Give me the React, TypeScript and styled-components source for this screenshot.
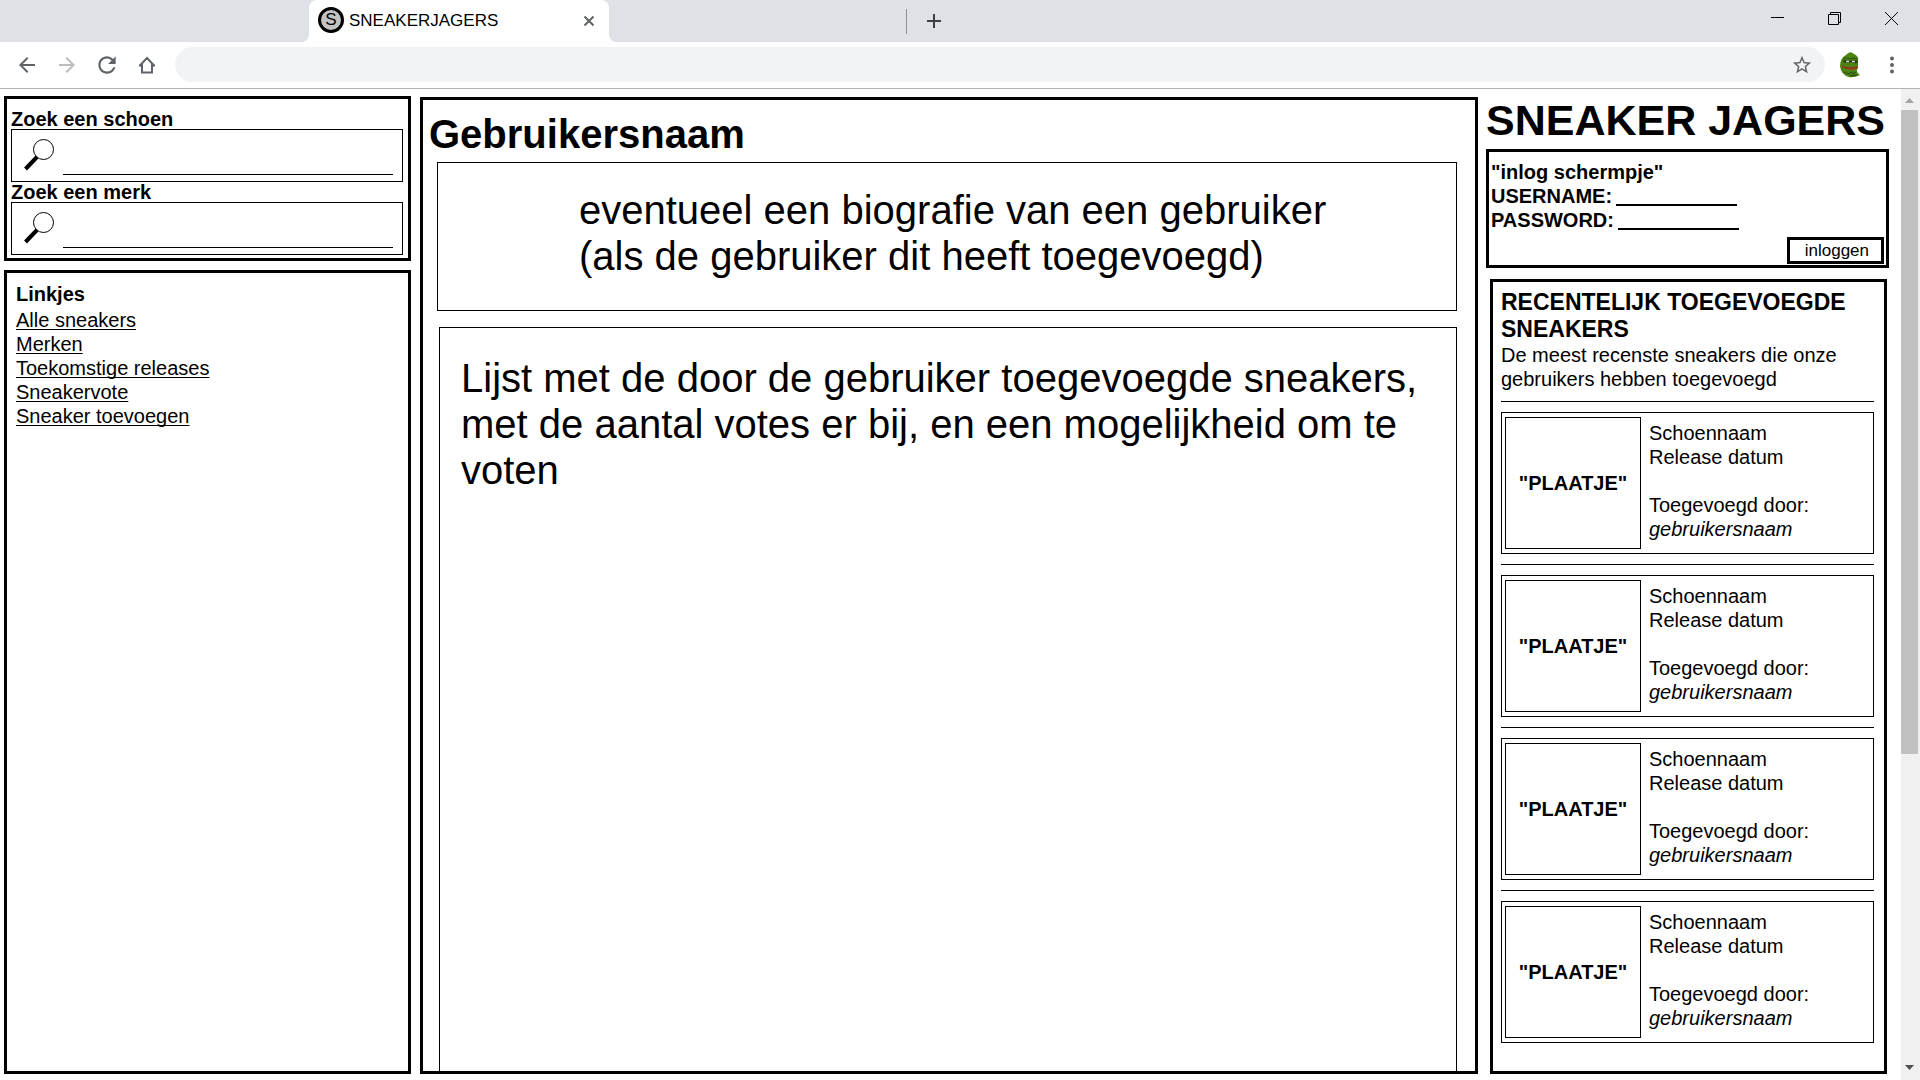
import React from 'react';
import styled, { createGlobalStyle } from 'styled-components';
import { MdArrowBack, MdArrowForward, MdRefresh, MdStarBorder } from 'react-icons/md';

const GlobalStyle = createGlobalStyle`
  * { box-sizing: border-box; }
  body {
    margin: 0;
    background: #fff;
    color: #000;
    font-family: 'Liberation Sans', Arial, sans-serif;
    font-size: 20px;
    line-height: 24px;
  }
  h1, h2, p, ul { margin: 0; padding: 0; }
  button, input { font-family: inherit; color: inherit; border: 0; background: none; padding: 0; margin: 0; }
  svg { display: block; }
`;

const Browser = styled.div`
  display: flex;
  flex-direction: column;
  min-height: 100vh;
`;

const TabStrip = styled.div`
  display: flex;
  align-items: center;
  height: 42px;
  padding-left: 309px;
  background: #dee1e6;
`;

const Tab = styled.div`
  position: relative;
  display: flex;
  align-items: center;
  width: 300px;
  height: 42px;
  padding: 0 8px 0 9px;
  background: #fff;
  border-radius: 8px 8px 0 0;
  &::before, &::after {
    content: '';
    position: absolute;
    bottom: 0;
    width: 8px;
    height: 8px;
  }
  &::before {
    left: -8px;
    background: radial-gradient(circle at 0 0, transparent 8px, #fff 8px);
  }
  &::after {
    right: -8px;
    background: radial-gradient(circle at 100% 0, transparent 8px, #fff 8px);
  }
`;

const Favicon = styled.span`
  display: flex;
  align-items: center;
  justify-content: center;
  width: 26px;
  height: 26px;
  margin: 0 5px 2px 0;
  border: 3px solid #000;
  border-radius: 50%;
  background: #c3c3c3;
  font-size: 17px;
`;

const TabTitle = styled.span`
  flex: 1;
  font-size: 17px;
  line-height: 20px;
`;

const IconButton = styled.button<{ $width?: number; $color?: string }>`
  display: flex;
  align-items: center;
  justify-content: center;
  flex: none;
  width: ${p => p.$width ?? 40}px;
  height: 32px;
  color: ${p => p.$color ?? '#5f6368'};
`;

const TabDivider = styled.span`
  width: 1px;
  height: 25px;
  margin: 0 7px 0 297px;
  background: #8e9195;
`;

const WindowButtons = styled.div`
  display: flex;
  margin-left: auto;
  padding-bottom: 5px;
`;

const Toolbar = styled.div`
  display: flex;
  align-items: center;
  height: 47px;
  padding: 0 6px 1px 7px;
  border-bottom: 1px solid #b4b5b7;
`;

const AddressBar = styled.div`
  display: flex;
  align-items: center;
  flex: 1;
  height: 35px;
  margin: 0 5px 0 8px;
  padding: 0 3px 0 18px;
  border-radius: 18px;
  background: #f1f3f4;
`;

const AddressInput = styled.input`
  flex: 1;
  height: 100%;
  font-size: 17px;
`;

const Viewport = styled.div`
  display: flex;
  flex: 1;
`;

const Page = styled.div`
  display: grid;
  grid-template-columns: 408px minmax(0, 1fr) 403px;
  gap: 8px;
  flex: 1;
  padding: 8px 12px 6px 4px;
`;

const Panel = styled.section`
  border: 3px solid #000;
`;

const LeftColumn = styled.aside`
  display: flex;
  flex-direction: column;
  gap: 9px;
  margin: -1px 1px 0 0;
`;

const SearchPanel = styled(Panel)`
  padding: 10px 5px 3px 4px;
`;

const Label = styled.label`
  display: block;
  font-weight: bold;
`;

const SearchLabel = styled(Label)`
  line-height: 20px;
`;

const SearchBox = styled.div`
  display: flex;
  align-items: flex-end;
  height: 53px;
  padding: 0 9px 6px 12px;
  border: 1px solid #000;
`;

const SearchInput = styled.input`
  flex: 1;
  min-width: 0;
  height: 36px;
  margin-left: 9px;
  border-bottom: 1px solid #000;
  font-size: 20px;
`;

const LinksPanel = styled(Panel)`
  flex: 1;
  padding: 8px 9px;
`;

const SmallHeading = styled.h2`
  font-size: 20px;
  line-height: 27px;
`;

const LinkList = styled.ul`
  list-style: none;
`;

const PageLink = styled.a`
  color: #000;
  text-decoration: underline;
  text-decoration-thickness: 1px;
  text-underline-offset: 2px;
  text-decoration-skip-ink: none;
`;

const MainPanel = styled.main`
  display: flex;
  flex-direction: column;
  border: 3px solid #000;
  padding: 8px 18px 0 14px;
`;

const UserName = styled.h1`
  margin: 3px 0 5px -8px;
  font-size: 40px;
  line-height: 46px;
`;

const Bio = styled.p`
  padding: 24px 100px 31px 141px;
  border: 1px solid #000;
  font-size: 40px;
  line-height: 46px;
`;

const UserList = styled.div`
  flex: 1;
  margin: 16px 0 0 2px;
  padding: 27px 21px;
  border: solid #000;
  border-width: 1px 1px 0;
  font-size: 40px;
  line-height: 46px;
`;

const RightColumn = styled.aside`
  display: flex;
  flex-direction: column;
`;

const SiteTitle = styled.h1`
  font-size: 43px;
  line-height: 46px;
  white-space: nowrap;
`;

const LoginForm = styled.form`
  display: flex;
  flex-direction: column;
  margin-top: 6px;
  padding: 8px 2px 1px;
  border: 3px solid #000;
  font-weight: bold;
`;

const LoginRow = styled.div`
  display: flex;
  gap: 4px;
`;

const LoginInput = styled.input`
  width: 121px;
  height: 22px;
  border-bottom: 2px solid #000;
  font-size: 17px;
`;

const LoginButton = styled.button`
  align-self: flex-end;
  margin-top: 5px;
  padding: 0 12px 0 15px;
  border: 3px solid #000;
  font-size: 17px;
  line-height: 21px;
`;

const RecentPanel = styled(Panel)`
  flex: 1;
  margin: 11px 2px 0 4px;
  padding: 7px 10px 0 8px;
`;

const RecentHeading = styled.h2`
  font-size: 23px;
  line-height: 27px;
`;

const Divider = styled.hr`
  margin: 10px 0;
  border: 0;
  border-top: 1px solid #000;
`;

const SneakerCard = styled.article`
  display: flex;
  height: 142px;
  padding: 4px 3px;
  border: 1px solid #000;
`;

const Picture = styled.div`
  display: flex;
  align-items: center;
  justify-content: center;
  width: 136px;
  height: 132px;
  border: 1px solid #000;
  font-weight: bold;
`;

const Details = styled.div`
  padding: 4px 8px;
`;

const AddedBy = styled.p`
  margin-top: 24px;
`;

const ScrollTrack = styled.div`
  display: flex;
  flex-direction: column;
  align-items: flex-start;
  width: 19px;
  background: #f0f0f0;
`;

const ScrollThumb = styled.div`
  width: 17px;
  height: 65%;
  background: #c1c1c1;
`;

const ScrollArrow = styled.svg`
  width: 17px;
  height: 21px;
  flex: none;
`;

const Spacer = styled.div`
  flex: 1;
`;

const Magnifier = () => (
  <svg width="30" height="40" viewBox="0 0 30 40" fill="none" stroke="#000">
    <ellipse cx="19.5" cy="14.5" rx="10" ry="10" strokeWidth="1" />
    <path d="M13 22 L1.5 34" strokeWidth="4" />
  </svg>
);

const Frog = () => (
  <svg width="20" height="26" viewBox="0 0 20 26">
    <path d="M6 3 Q10 -2 14 2 Q19 4 18 9 L18 16 Q15 20 20 23 Q14 26 9 25 Q1 23 0 14 Q0 6 6 3Z" fill="#4c8414" />
    <path d="M3 7 Q7 5 10 7 Q14 5 18 7 M4 20 Q7 22 10 22" stroke="#2c500c" fill="none" />
    <path d="M3 9 Q7 7 10 9 Q14 7 18 9 L17 11 Q14 12 11 10 Q7 12 3 10Z" fill="#22380c" />
    <path d="M6 9.5h3M12 9.5h3" stroke="#dfe3d5" strokeWidth="1.5" />
    <path d="M1 13 Q7 17 18 14 L17 17 Q8 19 2 15Z" fill="#a8421f" />
    <path d="M2 15 Q8 17 17 15.5" stroke="#6d2412" fill="none" strokeWidth="0.7" />
    <path d="M9 22 Q12 18 13 22 L16 20 M10 24 L17 23" stroke="#24400c" fill="none" />
  </svg>
);

const links = ['Alle sneakers', 'Merken', 'Toekomstige releases', 'Sneakervote', 'Sneaker toevoegen'];
const sneakers = [1, 2, 3, 4];

export default function App() {
  return (
    <Browser>
      <GlobalStyle />
      <TabStrip>
        <Tab>
          <Favicon>S</Favicon>
          <TabTitle>SNEAKERJAGERS</TabTitle>
          <IconButton $width={24} aria-label="Tabblad sluiten">
            <svg width="10" height="10" viewBox="0 0 10 10" stroke="currentColor" strokeWidth="2">
              <path d="M0.5 0.5 L9.5 9.5 M9.5 0.5 L0.5 9.5" />
            </svg>
          </IconButton>
        </Tab>
        <TabDivider />
        <IconButton aria-label="Nieuw tabblad" $color="#3c4043">
          <svg width="14" height="14" viewBox="0 0 14 14" stroke="currentColor" strokeWidth="2">
            <path d="M7 0 V14 M0 7 H14" />
          </svg>
        </IconButton>
        <WindowButtons>
          <IconButton $width={57} $color="#000" aria-label="Minimaliseren">
            <svg width="13" height="13" viewBox="0 0 13 13" stroke="currentColor">
              <path d="M0 5.5 H13" />
            </svg>
          </IconButton>
          <IconButton $width={57} $color="#000" aria-label="Verkleinen">
            <svg width="13" height="13" viewBox="0 0 13 13" stroke="currentColor" fill="none">
              <path d="M0.5 2.5 H10.5 V12.5 H0.5 Z M2.5 2.5 V0.5 H12.5 V10.5 H10.5" />
            </svg>
          </IconButton>
          <IconButton $width={57} $color="#000" aria-label="Sluiten">
            <svg width="13" height="13" viewBox="0 0 13 13" stroke="currentColor">
              <path d="M0 0 L13 13 M13 0 L0 13" />
            </svg>
          </IconButton>
        </WindowButtons>
      </TabStrip>

      <Toolbar>
        <IconButton aria-label="Terug"><MdArrowBack size={24} /></IconButton>
        <IconButton aria-label="Vooruit" $color="#babcbe"><MdArrowForward size={24} /></IconButton>
        <IconButton aria-label="Vernieuwen"><MdRefresh size={26} /></IconButton>
        <IconButton aria-label="Startpagina">
          <svg width="18" height="18" viewBox="0 0 18 18" fill="none" stroke="currentColor" strokeWidth="2">
            <path d="M1.5 10 L9 2 L16.5 10 M4 8 V16.5 H14 V8 M1 9.5 H4 M14 9.5 H17" />
          </svg>
        </IconButton>
        <AddressBar>
          <AddressInput aria-label="Adres" />
          <IconButton aria-label="Bladwijzer"><MdStarBorder size={22} /></IconButton>
        </AddressBar>
        <IconButton aria-label="Profiel"><Frog /></IconButton>
        <IconButton $width={44} aria-label="Menu">
          <svg width="4" height="18" viewBox="0 0 4 18" fill="currentColor">
            <circle cx="2" cy="2.5" r="2" />
            <circle cx="2" cy="9" r="2" />
            <circle cx="2" cy="15.5" r="2" />
          </svg>
        </IconButton>
      </Toolbar>

      <Viewport>
        <Page>
          <LeftColumn>
            <SearchPanel>
              <SearchLabel htmlFor="schoen">Zoek een schoen</SearchLabel>
              <SearchBox>
                <Magnifier />
                <SearchInput id="schoen" />
              </SearchBox>
              <SearchLabel htmlFor="merk">Zoek een merk</SearchLabel>
              <SearchBox>
                <Magnifier />
                <SearchInput id="merk" />
              </SearchBox>
            </SearchPanel>
            <LinksPanel>
              <SmallHeading>Linkjes</SmallHeading>
              <LinkList>
                {links.map(link => (
                  <li key={link}><PageLink href="#">{link}</PageLink></li>
                ))}
              </LinkList>
            </LinksPanel>
          </LeftColumn>

          <MainPanel>
            <UserName>Gebruikersnaam</UserName>
            <Bio>
              eventueel een biografie van een gebruiker<br />
              (als de gebruiker dit heeft toegevoegd)
            </Bio>
            <UserList>
              <p>Lijst met de door de gebruiker toegevoegde sneakers, met de aantal votes er bij, en een mogelijkheid om te voten</p>
            </UserList>
          </MainPanel>

          <RightColumn>
            <SiteTitle>SNEAKER JAGERS</SiteTitle>
            <LoginForm>
              <p>"inlog schermpje"</p>
              <LoginRow>
                <Label htmlFor="username">USERNAME:</Label>
                <LoginInput id="username" />
              </LoginRow>
              <LoginRow>
                <Label htmlFor="password">PASSWORD:</Label>
                <LoginInput id="password" type="password" />
              </LoginRow>
              <LoginButton type="button">inloggen</LoginButton>
            </LoginForm>
            <RecentPanel>
              <RecentHeading>RECENTELIJK TOEGEVOEGDE SNEAKERS</RecentHeading>
              <p>De meest recenste sneakers die onze gebruikers hebben toegevoegd</p>
              {sneakers.map(id => (
                <React.Fragment key={id}>
                  <Divider />
                  <SneakerCard>
                    <Picture>"PLAATJE"</Picture>
                    <Details>
                      <p>Schoennaam</p>
                      <p>Release datum</p>
                      <AddedBy>Toegevoegd door:<br /><em>gebruikersnaam</em></AddedBy>
                    </Details>
                  </SneakerCard>
                </React.Fragment>
              ))}
            </RecentPanel>
          </RightColumn>
        </Page>
        <ScrollTrack>
          <ScrollArrow viewBox="0 0 17 21"><path d="M4 14 L8.5 9 L13 14Z" fill="#a3a3a3" /></ScrollArrow>
          <ScrollThumb />
          <Spacer />
          <ScrollArrow viewBox="0 0 17 21"><path d="M4 6 L8.5 11 L13 6Z" fill="#505050" /></ScrollArrow>
        </ScrollTrack>
      </Viewport>
    </Browser>
  );
}
